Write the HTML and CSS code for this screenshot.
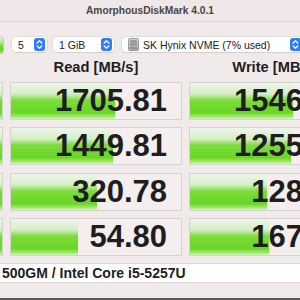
FILE: index.html
```html
<!DOCTYPE html>
<html>
<head>
<meta charset="utf-8">
<link rel="stylesheet" href="styles.css">
</head>
<body>
<div class="window">
  <div class="titlebar">AmorphousDiskMark 4.0.1</div>
  <div class="toolbar">
    <div class="allbtn"></div>
    <div class="select sel-count"><span class="sel-text">5</span><span class="stepper"><svg width="11" height="13" viewBox="0 0 11 13"><path d="M3.2 5 L5.5 2.8 L7.8 5 M3.2 8 L5.5 10.2 L7.8 8" fill="none" stroke="#fff" stroke-width="1.3" stroke-linecap="round" stroke-linejoin="round"/></svg></span></div>
    <div class="select sel-size"><span class="sel-text">1 GiB</span><span class="stepper"><svg width="11" height="13" viewBox="0 0 11 13"><path d="M3.2 5 L5.5 2.8 L7.8 5 M3.2 8 L5.5 10.2 L7.8 8" fill="none" stroke="#fff" stroke-width="1.3" stroke-linecap="round" stroke-linejoin="round"/></svg></span></div>
    <div class="select sel-disk">
      <svg class="disk" width="11" height="13" viewBox="0 0 11 13">
        <defs><linearGradient id="dg" x1="0" y1="0" x2="0" y2="1"><stop offset="0" stop-color="#d8d8d8"/><stop offset="1" stop-color="#a9a9a9"/></linearGradient></defs>
        <rect x="0.5" y="0.5" width="10" height="12" rx="1.5" fill="url(#dg)" stroke="#8a8a8a" stroke-width="0.8"/>
        <rect x="2" y="2" width="7" height="6" rx="0.8" fill="#9c9c9c"/>
        <line x1="2" y1="10" x2="9" y2="10" stroke="#6f6f6f" stroke-width="1"/>
      </svg>
      <span class="sel-text">SK Hynix NVME (7% used)</span>
      <span class="stepper"><svg width="11" height="13" viewBox="0 0 11 13"><path d="M3.2 5 L5.5 2.8 L7.8 5 M3.2 8 L5.5 10.2 L7.8 8" fill="none" stroke="#fff" stroke-width="1.3" stroke-linecap="round" stroke-linejoin="round"/></svg></span>
    </div>
  </div>
  <div class="grid">
    <div class="head"></div>
    <div class="head">Read [MB/s]</div>
    <div class="head">Write [MB/s]</div>

    <div class="cell testbtn"></div>
    <div class="cell"><div class="bar" style="width:104px"></div><span class="num">1705.81</span></div>
    <div class="cell"><div class="bar" style="width:103px"></div><span class="num">1546.92</span></div>

    <div class="cell testbtn"></div>
    <div class="cell"><div class="bar" style="width:102px"></div><span class="num">1449.81</span></div>
    <div class="cell"><div class="bar" style="width:101px"></div><span class="num">1255.47</span></div>

    <div class="cell testbtn"></div>
    <div class="cell"><div class="bar" style="width:86px"></div><span class="num">320.78</span></div>
    <div class="cell"><div class="bar" style="width:77px"></div><span class="num">128.35</span></div>

    <div class="cell testbtn"></div>
    <div class="cell"><div class="bar" style="width:67px"></div><span class="num">54.80</span></div>
    <div class="cell"><div class="bar" style="width:79px"></div><span class="num">167.52</span></div>
  </div>
  <div class="footer">500GM / Intel Core i5-5257U</div>
</div>
</body>
</html>
```

FILE: styles.css
```css
html, body {
  margin: 0;
  padding: 0;
}
body {
  width: 300px;
  height: 300px;
  overflow: hidden;
  background: #f1eaea;
  font-family: "Liberation Sans", Arial, sans-serif;
  color: #1e1e1e;
}
.window {
  height: 298px;
  border-bottom: 2px solid #5a5a5a;
  display: flex;
  flex-direction: column;
}
.titlebar {
  height: 21px;
  border-bottom: 1px solid #d9d2d2;
  background: #efe7e8;
  text-align: center;
  font-weight: bold;
  font-size: 10.2px;
  line-height: 22px;
  color: #4a4545;
}
.toolbar {
  display: flex;
  align-items: center;
  margin-top: 15px;
  margin-left: -57px;
  height: 15px;
}
.allbtn {
  width: 59px;
  height: 16px;
  border: 1px solid #cfc9c9;
  border-radius: 3px;
  background: linear-gradient(#e6f2dc 0%, #b3e590 35%, #72da2c 55%, #6ad624 85%, #a8ec7c 100%);
  flex: none;
}
.select {
  display: flex;
  align-items: center;
  height: 15px;
  background: #fff;
  border-radius: 4px;
  box-shadow: 0 0 0 0.5px #d6d0d0, 0 0.5px 1px rgba(0,0,0,0.12);
  font-size: 10.5px;
  color: #222;
  flex: none;
  box-sizing: border-box;
}
.sel-count {
  width: 35px;
  margin-left: 8px;
  padding-left: 6px;
}
.sel-size {
  width: 61px;
  margin-left: 6px;
  padding-left: 6px;
}
.sel-disk {
  width: 181px;
  margin-left: 8px;
  padding-left: 6px;
}
.sel-text {
  flex: 1;
  white-space: nowrap;
}
.disk {
  margin-right: 4px;
  flex: none;
}
.stepper {
  width: 11px;
  height: 13px;
  border-radius: 3px;
  background: #2f7df6;
  margin-right: 2px;
  display: flex;
  flex: none;
}
.grid {
  display: grid;
  grid-template-columns: 60px 172px 172px;
  grid-template-rows: 30px repeat(4, 38px);
  column-gap: 7px;
  row-gap: 0;
  margin-left: -57px;
}
.head {
  font-weight: bold;
  font-size: 14.7px;
  line-height: 17px;
  text-align: center;
  padding-top: 7px;
  color: #1e1e1e;
}
.cell {
  position: relative;
  box-sizing: border-box;
  border: 1px solid #d8d1d1;
  background: #f4eeee;
  display: flex;
  align-items: center;
  justify-content: flex-end;
  padding-right: 14px;
  margin-bottom: 0;
}
.grid > .cell:nth-child(n+7) {
  margin-top: 7.33px;
}
.grid {
  grid-template-rows: 30px 38px 45.33px 45.33px 45.33px;
}
.testbtn {
  background: linear-gradient(#eef5ea 0%, #d6efc6 30%, #7cdc3c 48%, #6ad624 82%, #a8ec7c 95%, #dff6cf 100%);
}
.bar {
  position: absolute;
  left: 0;
  top: 0;
  bottom: 0;
  background: linear-gradient(#eef5ea 0%, #d6efc6 30%, #7cdc3c 48%, #6ad624 82%, #a8ec7c 95%, #dff6cf 100%);
}
.num {
  position: relative;
  font-weight: bold;
  font-size: 31px;
  line-height: 36px;
  color: #1e1e1e;
  white-space: nowrap;
}
.footer {
  margin-top: 7px;
  margin-left: -57px;
  width: 420px;
  height: 20px;
  box-sizing: border-box;
  background: #fff;
  border: 1px solid #dcd5d5;
  padding-left: 58px;
  font-weight: bold;
  font-size: 14px;
  line-height: 18px;
  color: #1e1e1e;
  white-space: nowrap;
}
```
